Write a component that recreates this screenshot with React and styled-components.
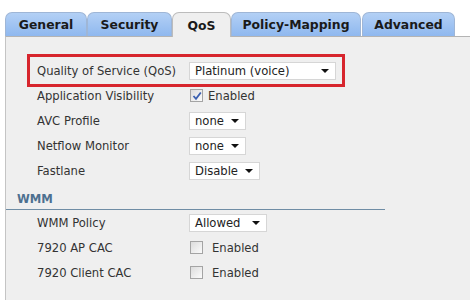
import styled, { createGlobalStyle } from "styled-components"

const Global = createGlobalStyle`
	body {
		margin: 0;
		background: #fff;
		font-family: "DejaVu Sans", Verdana, sans-serif;
	}
`;

const Page = styled.div`
	width: 470px;
	height: 300px;
	padding: 12px 0 0 5px;
	box-sizing: border-box;
	overflow: hidden;
`;

const TabBar = styled.div`
	display: flex;
	height: 24px;
	position: relative;
	z-index: 1;
`;

const Tab = styled.div`
	box-sizing: border-box;
	width: ${({w}) => w}px;
	height: ${({active}) => active ? 25 : 24}px;
	margin-right: ${({gap}) => gap || 0}px;
	display: flex;
	align-items: center;
	justify-content: center;
	font-size: 12.4px;
	font-weight: bold;
	color: #1a1a1a;
	border: 1px solid ${({active}) => active ? '#bcbcbc' : '#9fb6d6'};
	border-bottom: none;
	border-radius: 7px 7px 0 0;
	background: ${({active}) => active ? '#efefef' : 'linear-gradient(#b3d0f5, #8fb8ef)'};
`;

const Panel = styled.div`
	height: 264px;
	background: #efefef;
	border-top: 1px solid #b4b4b4;
	border-left: 1px solid #c4c4c4;
	padding-top: 21px;
	box-sizing: border-box;
`;

const Row = styled.div`
	display: grid;
	grid-template-columns: 152px auto;
	align-items: center;
	width: 304px;
	height: 25px;
	margin-left: 25px;
	padding-left: 6px;
	font-size: 11.6px;
	color: #333;
	outline: ${({highlight}) => highlight ? '3px solid #d7252d' : 'none'};
	outline-offset: 1px;
`;

const Label = styled.span`
	white-space: nowrap;
`;

const Select = styled.div`
	box-sizing: border-box;
	width: ${({w}) => w}px;
	height: 18px;
	background: #fff;
	border: 1px solid #d6d6d6;
	display: flex;
	align-items: center;
	justify-content: space-between;
	padding: 0 6px 0 5px;
	font-size: 11.6px;
	color: #222;
`;

const Arrow = styled.span`
	width: 0;
	height: 0;
	border-left: 4px solid transparent;
	border-right: 4px solid transparent;
	border-top: 4px solid #111;
	margin-top: 1px;
`;

const Check = styled.span`
	display: flex;
	align-items: center;
	gap: ${({checked}) => checked ? 5 : 9}px;
	padding-left: 1px;
`;

const Box = styled.span`
	box-sizing: border-box;
	width: 13px;
	height: 13px;
	border: 1px solid #a4a4a4;
	background: linear-gradient(135deg, #dcdcdc, #fbfbfb);
	display: flex;
	align-items: center;
	justify-content: center;
`;

const Section = styled.div`
	width: 379px;
	height: 27px;
	box-sizing: border-box;
	padding: 9px 0 0 11px;
	border-bottom: 1px solid #6f8da5;
	font-size: 11.6px;
	font-weight: bold;
	color: #4d7090;
`;

function Dropdown({w, value}) {
	return <Select w={w}>{value}<Arrow /></Select>
}

function Checkbox({checked}) {
	return (
		<Check checked={checked}>
			<Box>
				{checked &&
					<svg width="10" height="10" viewBox="0 0 10 10">
						<path d="M1.5 5 L4 7.8 L8.8 1.5" fill="none" stroke="#3a5fb0" strokeWidth="1.8" />
					</svg>
				}
			</Box>
			Enabled
		</Check>
	)
}

export default function App() {
	return (
		<Page>
			<Global />
			<TabBar>
				<Tab w={82}>General</Tab>
				<Tab w={85}>Security</Tab>
				<Tab w={59} active>QoS</Tab>
				<Tab w={130} gap={1}>Policy-Mapping</Tab>
				<Tab w={93}>Advanced</Tab>
			</TabBar>
			<Panel>
				<Row highlight>
					<Label>Quality of Service (QoS)</Label>
					<Dropdown w={147} value="Platinum (voice)" />
				</Row>
				<Row>
					<Label>Application Visibility</Label>
					<Checkbox checked />
				</Row>
				<Row>
					<Label>AVC Profile</Label>
					<Dropdown w={57} value="none" />
				</Row>
				<Row>
					<Label>Netflow Monitor</Label>
					<Dropdown w={57} value="none" />
				</Row>
				<Row>
					<Label>Fastlane</Label>
					<Dropdown w={71} value="Disable" />
				</Row>
				<Section>WMM</Section>
				<Row>
					<Label>WMM Policy</Label>
					<Dropdown w={78} value="Allowed" />
				</Row>
				<Row>
					<Label>7920 AP CAC</Label>
					<Checkbox />
				</Row>
				<Row>
					<Label>7920 Client CAC</Label>
					<Checkbox />
				</Row>
			</Panel>
		</Page>
    )
}
